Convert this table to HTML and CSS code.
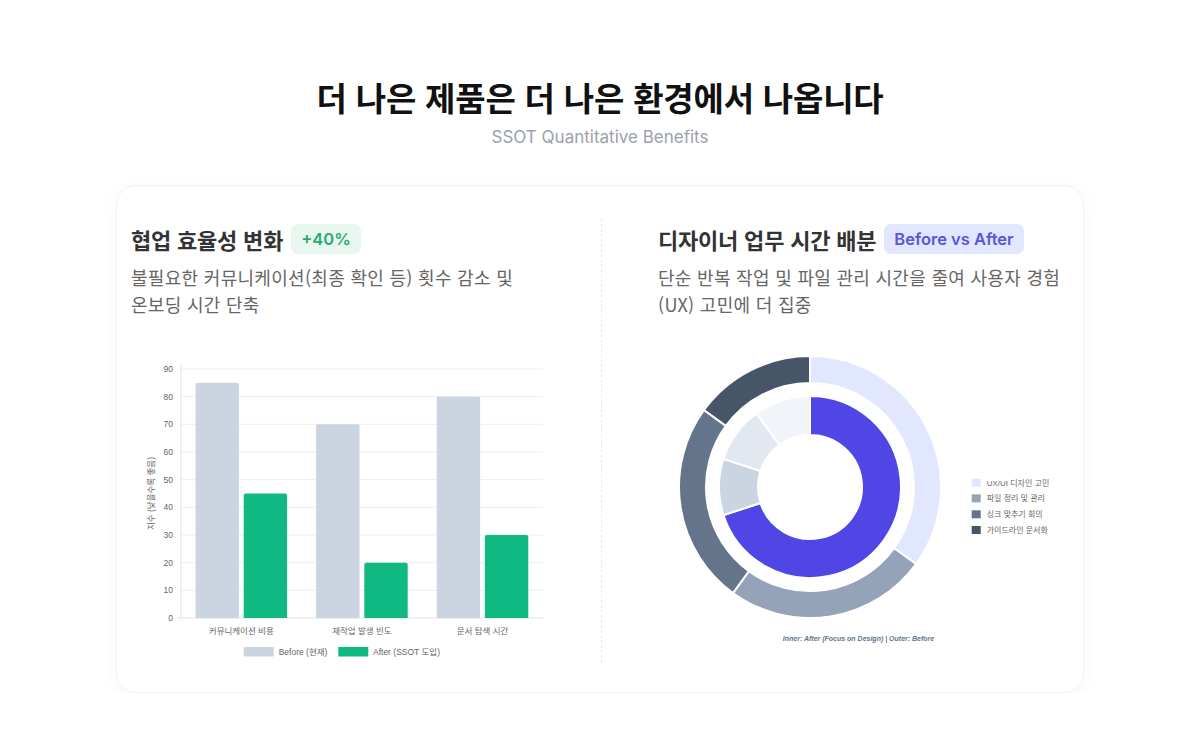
FILE: index.html
```html
<!DOCTYPE html>
<html lang="ko">
<head>
<meta charset="utf-8">
<title>SSOT Quantitative Benefits</title>
<link rel="stylesheet" href="styles.css">
</head>
<body>
<header class="page-head">
  <h1 class="title">더 나은 제품은 더 나은 환경에서 나옵니다</h1>
  <p class="subtitle">SSOT Quantitative Benefits</p>
</header>
<main class="card">
  <section class="col col-left">
    <div class="col-head">
      <h2 class="col-title">협업 효율성 변화</h2>
      <span class="badge badge-green">+40%</span>
    </div>
    <p class="col-desc">불필요한 커뮤니케이션(최종 확인 등) 횟수 감소 및 온보딩 시간 단축</p>
    <svg class="chart" width="412" height="312" viewBox="0 0 412 312">
      <g class="grid">
        <line x1="50" y1="18" x2="412" y2="18"/>
        <line x1="50" y1="45.67" x2="412" y2="45.67"/>
        <line x1="50" y1="73.33" x2="412" y2="73.33"/>
        <line x1="50" y1="101" x2="412" y2="101"/>
        <line x1="50" y1="128.67" x2="412" y2="128.67"/>
        <line x1="50" y1="156.33" x2="412" y2="156.33"/>
        <line x1="50" y1="184" x2="412" y2="184"/>
        <line x1="50" y1="211.67" x2="412" y2="211.67"/>
        <line x1="50" y1="239.33" x2="412" y2="239.33"/>
      </g>
      <line class="axis" x1="50" y1="14" x2="50" y2="267"/>
      <line class="axis" x1="46" y1="267" x2="412" y2="267"/>
      <g class="tick" text-anchor="end">
        <text x="42" y="21">90</text>
        <text x="42" y="48.7">80</text>
        <text x="42" y="76.3">70</text>
        <text x="42" y="104">60</text>
        <text x="42" y="131.7">50</text>
        <text x="42" y="159.3">40</text>
        <text x="42" y="187">30</text>
        <text x="42" y="214.7">20</text>
        <text x="42" y="242.3">10</text>
        <text x="42" y="270">0</text>
      </g>
      <text class="tick" x="0" y="0" text-anchor="middle" transform="translate(23 142.5) rotate(-90)">지수 (낮을수록 좋음)</text>
      <g class="bar-before">
        <path d="M64.5 267 V33.8 Q64.5 31.8 66.5 31.8 H105.9 Q107.9 31.8 107.9 33.8 V267 Z"/>
        <path d="M185.1 267 V75.3 Q185.1 73.3 187.1 73.3 H226.5 Q228.5 73.3 228.5 75.3 V267 Z"/>
        <path d="M305.7 267 V47.7 Q305.7 45.7 307.7 45.7 H347.1 Q349.1 45.7 349.1 47.7 V267 Z"/>
      </g>
      <g class="bar-after">
        <path d="M112.7 267 V144.5 Q112.7 142.5 114.7 142.5 H154.1 Q156.1 142.5 156.1 144.5 V267 Z"/>
        <path d="M233.3 267 V213.7 Q233.3 211.7 235.3 211.7 H274.7 Q276.7 211.7 276.7 213.7 V267 Z"/>
        <path d="M353.9 267 V186 Q353.9 184 355.9 184 H395.3 Q397.3 184 397.3 186 V267 Z"/>
      </g>
      <g class="tick" text-anchor="middle">
        <text x="110.3" y="283">커뮤니케이션 비용</text>
        <text x="230.9" y="283">재작업 발생 빈도</text>
        <text x="351.5" y="283">문서 탐색 시간</text>
      </g>
      <rect class="legend-before" x="112.7" y="296" width="30" height="9.5"/>
      <text class="tick" x="147.7" y="303.5">Before (현재)</text>
      <rect class="legend-after" x="207.3" y="296" width="30" height="9.5"/>
      <text class="tick" x="242" y="303.5">After (SSOT 도입)</text>
    </svg>
  </section>
  <section class="col col-right">
    <div class="col-head">
      <h2 class="col-title">디자이너 업무 시간 배분</h2>
      <span class="badge badge-indigo">Before vs After</span>
    </div>
    <p class="col-desc">단순 반복 작업 및 파일 관리 시간을 줄여 사용자 경험 (UX) 고민에 더 집중</p>
    <svg class="chart" width="412" height="312" viewBox="0 0 412 312">
      <g class="seg">
        <path fill="#e0e7ff" d="M152 5 A131 131 0 0 1 257.98 213 L236.14 197.13 A104 104 0 0 0 152 32 Z"/>
        <path fill="#94a3b8" d="M257.98 213 A131 131 0 0 1 75 241.98 L90.87 220.14 A104 104 0 0 0 236.14 197.13 Z"/>
        <path fill="#64748b" d="M75 241.98 A131 131 0 0 1 46.02 59 L67.86 74.87 A104 104 0 0 0 90.87 220.14 Z"/>
        <path fill="#475569" d="M46.02 59 A131 131 0 0 1 152 5 L152 32 A104 104 0 0 0 67.86 74.87 Z"/>
        <path fill="#4f46e5" d="M152 45 A91 91 0 1 1 65.45 164.12 L102.54 152.07 A52 52 0 1 0 152 84 Z"/>
        <path fill="#cbd5e1" d="M65.45 164.12 A91 91 0 0 1 65.45 107.88 L102.54 119.93 A52 52 0 0 0 102.54 152.07 Z"/>
        <path fill="#e2e8f0" d="M65.45 107.88 A91 91 0 0 1 98.51 62.38 L121.43 93.93 A52 52 0 0 0 102.54 119.93 Z"/>
        <path fill="#f1f5f9" d="M98.51 62.38 A91 91 0 0 1 152 45 L152 84 A52 52 0 0 0 121.43 93.93 Z"/>
      </g>
      <rect x="313.7" y="127.7" width="9" height="8" fill="#e0e7ff"/>
      <text class="legend-text" x="328.7" y="134.5">UX/UI 디자인 고민</text>
      <rect x="313.7" y="143.3" width="9" height="8" fill="#94a3b8"/>
      <text class="legend-text" x="328.7" y="150.1">파일 정리 및 관리</text>
      <rect x="313.7" y="159.3" width="9" height="8" fill="#64748b"/>
      <text class="legend-text" x="328.7" y="166.1">싱크 맞추기 회의</text>
      <rect x="313.7" y="175" width="9" height="8" fill="#475569"/>
      <text class="legend-text" x="328.7" y="181.8">가이드라인 문서화</text>
      <text class="footnote" x="200.5" y="289.5" text-anchor="middle">Inner: After (Focus on Design) | Outer: Before</text>
    </svg>
  </section>
</main>
</body>
</html>
```

FILE: styles.css
```css
* { box-sizing: border-box; }

html, body {
  margin: 0;
  padding: 0;
  background: #ffffff;
}

body {
  font-family: "Inter", "Noto Sans CJK KR", sans-serif;
  color: #111111;
  padding-top: 77px;
}

.page-head {
  text-align: center;
}

.title {
  margin: 0;
  font-family: "Noto Sans CJK KR", sans-serif;
  font-size: 33px;
  line-height: 40px;
  font-weight: 700;
  color: #111111;
  letter-spacing: -0.2px;
}

.subtitle {
  margin: 8px 0 0;
  font-size: 17px;
  line-height: 24px;
  color: #9aa1ab;
}

.card {
  width: 968px;
  height: 508px;
  margin: 36px auto 0;
  padding: 33px 14px 31px;
  background: #ffffff;
  border: 1px solid #f0f2f5;
  border-radius: 20px;
  box-shadow: 0 4px 18px rgba(15, 23, 42, 0.04);
  display: grid;
  grid-template-columns: 1fr 1fr;
}

.col {
  padding-top: 5px;
  display: flex;
  flex-direction: column;
}

.col-left {
  padding-right: 58px;
}

.col-right {
  padding-left: 56px;
  border-left: 1px dashed #e5e9ef;
}

.col-head {
  display: flex;
  align-items: center;
  gap: 8px;
  height: 30px;
}

.col-title {
  margin: 0;
  font-family: "Noto Sans CJK KR", sans-serif;
  font-size: 22px;
  font-weight: 700;
  color: #333333;
  letter-spacing: -0.2px;
}

.badge {
  display: inline-flex;
  align-items: center;
  height: 30px;
  padding: 0 10px;
  border-radius: 7px;
  font-family: "Inter", sans-serif;
  font-size: 16.5px;
  font-weight: 600;
}

.badge-green {
  background: #e8f8f0;
  color: #2aa876;
}

.badge-indigo {
  background: #e0e7ff;
  color: #5b55db;
}

.col-desc {
  margin: 10px 0 0;
  font-family: "Noto Sans CJK KR", sans-serif;
  font-size: 18px;
  line-height: 27px;
  letter-spacing: 0.3px;
  color: #666666;
  word-break: keep-all;
}

.chart {
  display: block;
  margin-top: 33px;
  font-family: "Liberation Sans", "Noto Sans CJK KR", sans-serif;
}

.grid line {
  stroke: #eeeeee;
  stroke-width: 1;
}

.axis {
  stroke: #e2e2e2;
  stroke-width: 1;
}

.tick {
  font-size: 8.5px;
  fill: #666666;
}

.bar-before path,
.legend-before {
  fill: #cbd5e1;
}

.bar-after path,
.legend-after {
  fill: #10b981;
}

.seg path {
  stroke: #ffffff;
  stroke-width: 2;
}

.legend-text {
  font-size: 8px;
  fill: #666666;
}

.footnote {
  font-size: 7px;
  font-style: italic;
  font-weight: 700;
  fill: #64748b;
}
```
